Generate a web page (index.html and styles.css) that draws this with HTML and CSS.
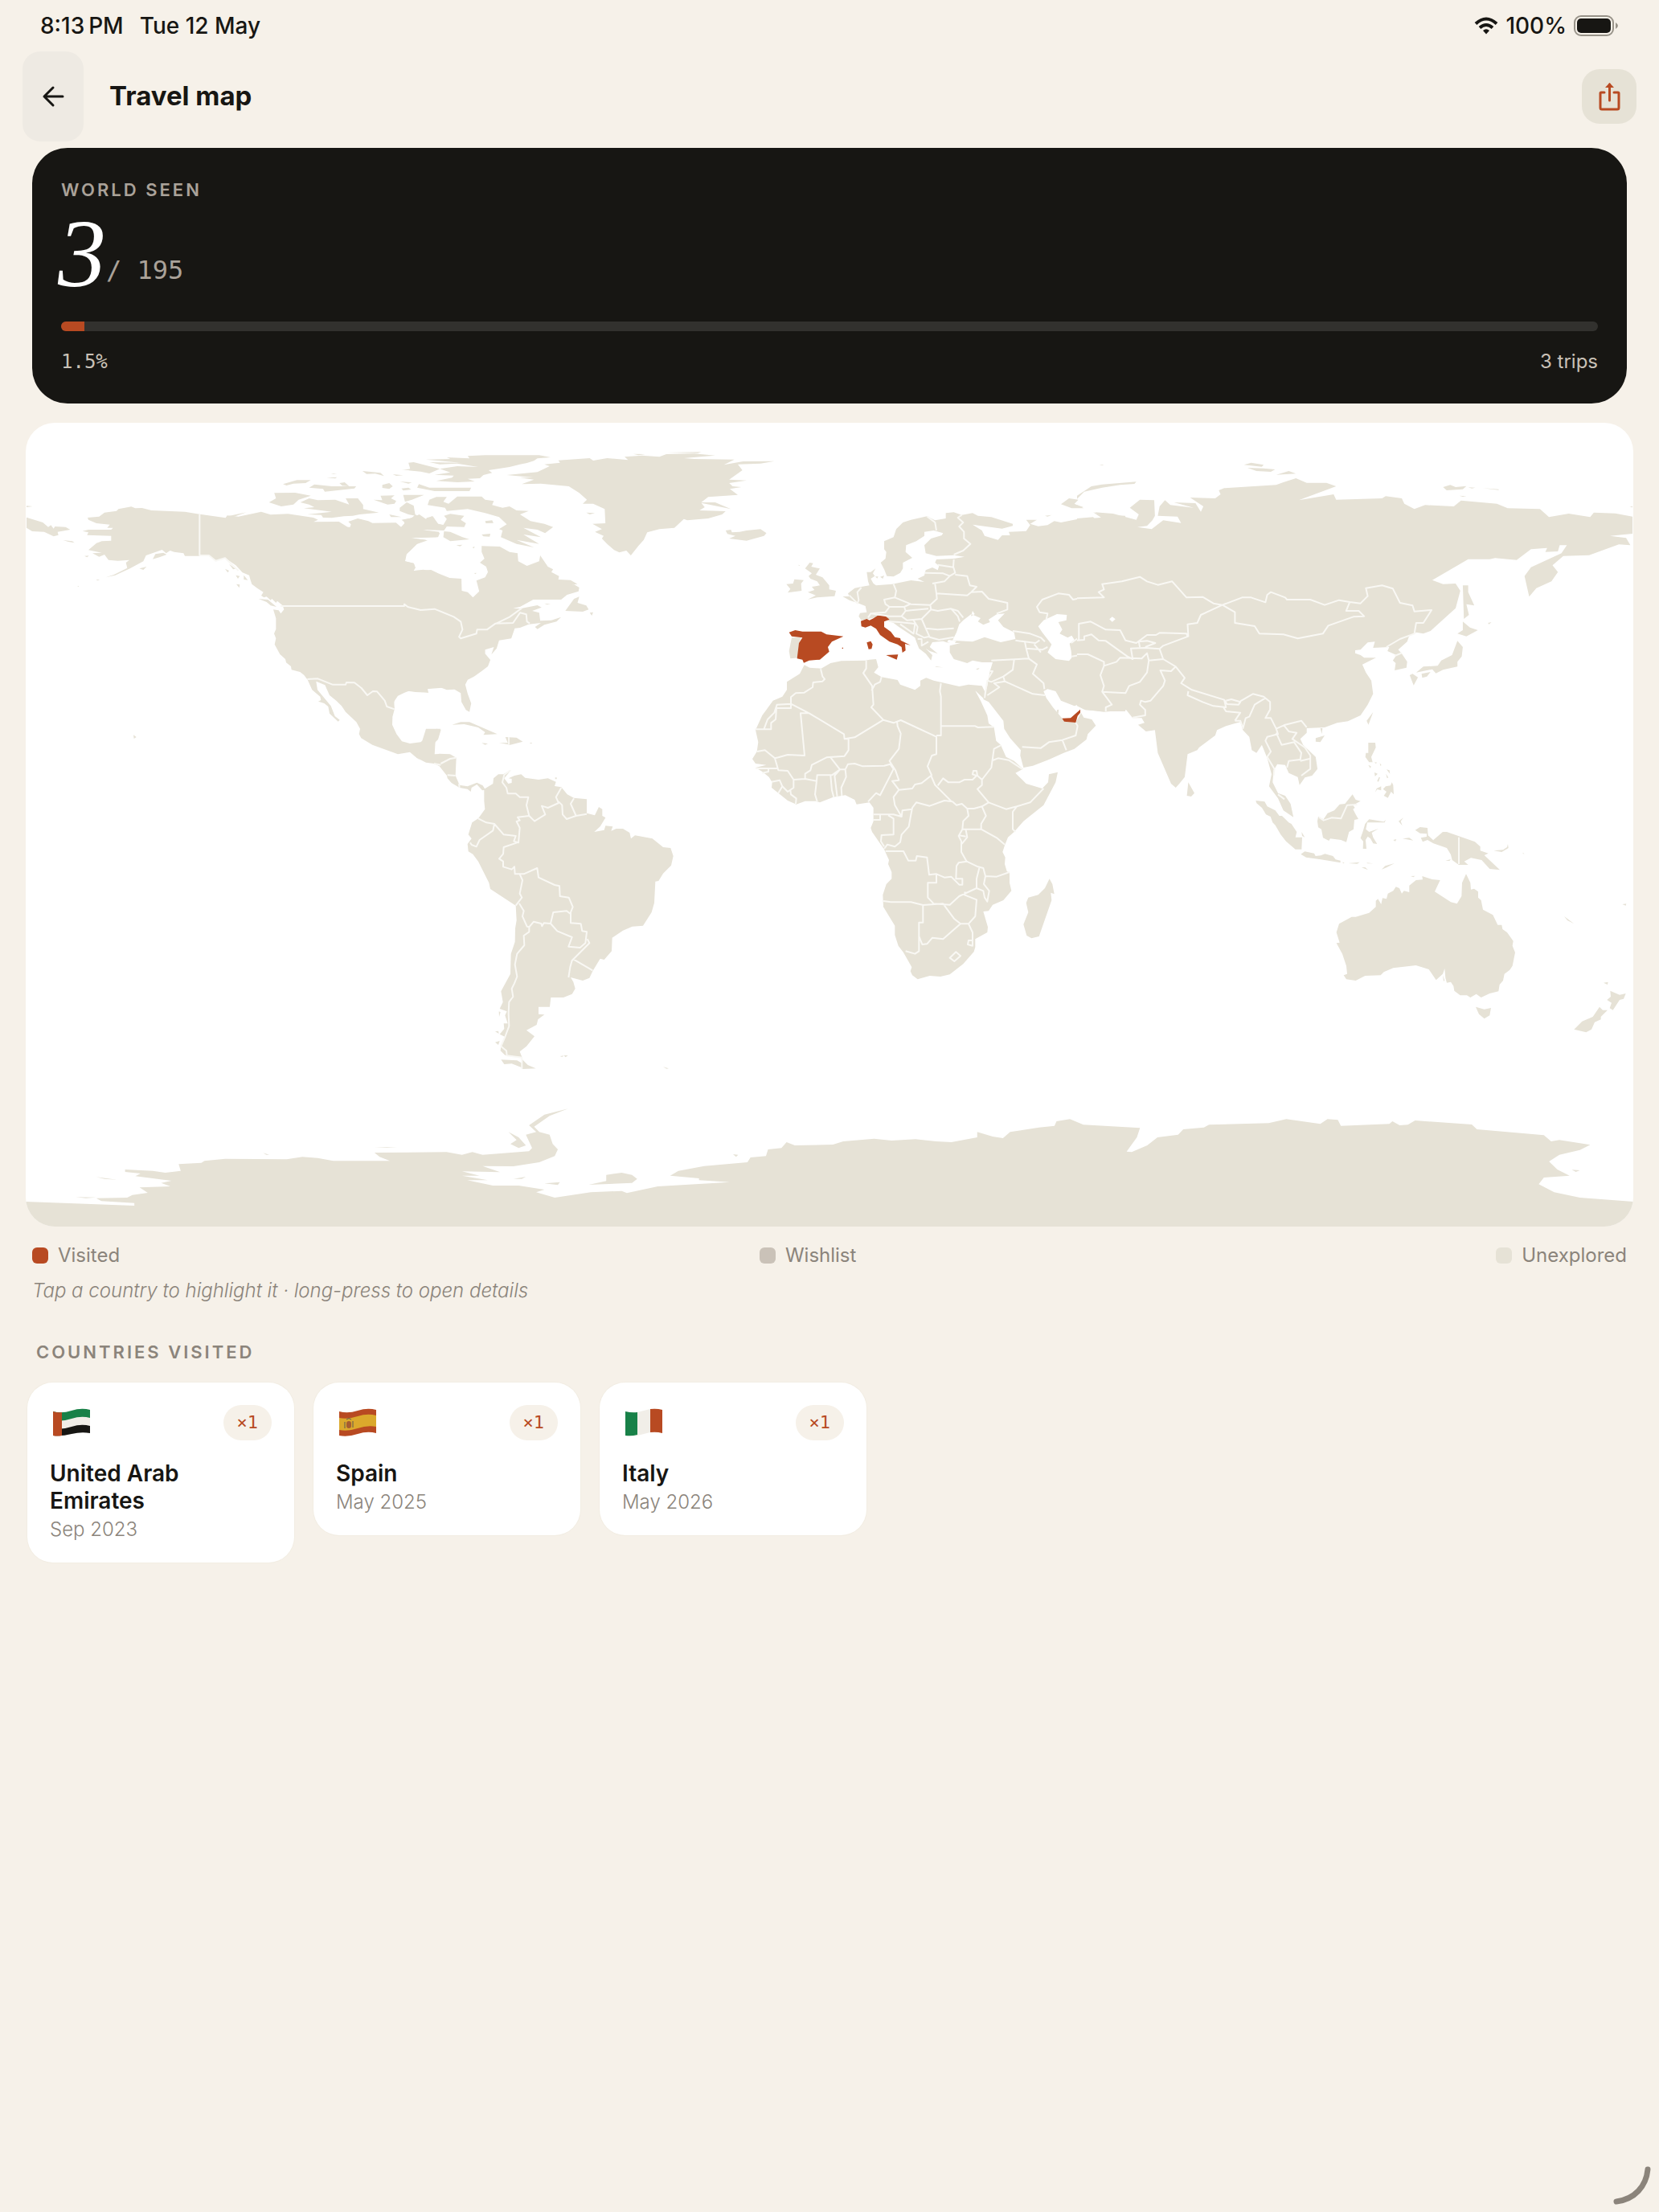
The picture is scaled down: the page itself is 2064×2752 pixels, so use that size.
FILE: index.html
```html
<!DOCTYPE html>
<html lang="en">
<head>
<meta charset="utf-8">
<meta name="viewport" content="width=device-width, initial-scale=1">
<title>Travel map</title>
<link rel="stylesheet" href="styles.css">
</head>
<body>
<div class="status">
  <span class="status-time">8:13&#8201;PM</span>
  <span class="status-date">Tue 12 May</span>
  <span class="status-right">
    <svg class="wifi" viewBox="0 0 30 22" aria-hidden="true"><g fill="none" stroke="#171613" stroke-width="4"><path d="M2 8.500Q15-3.500 28 8.500"/><path d="M7 13.500Q15 6.500 23 13.500"/></g><path d="M11 17Q15 13.500 19 17L15 21.500Z" fill="#171613"/></svg>
    <span>100%</span>
    <svg class="battery" viewBox="0 0 56 26" aria-hidden="true"><rect x="1" y="1" width="48" height="24" rx="8" fill="none" stroke="#989389" stroke-width="2"/><rect x="4" y="4" width="42" height="18" rx="5" fill="#171613"/><path d="M52 9Q55 11 55 13T52 17Z" fill="#989389"/></svg>
  </span>
</div>

<header class="header">
  <button class="back" type="button" aria-label="Back"><svg viewBox="0 0 28 28"><path d="M14 3L3 14 14 25M3 14H26" fill="none" stroke="#171613" stroke-width="3" stroke-linecap="round" stroke-linejoin="round"/></svg></button>
  <h1 class="title">Travel map</h1>
  <button class="share" type="button" aria-label="Share"><svg viewBox="0 0 28 36"><g fill="none" stroke="#b84a22" stroke-width="3" stroke-linecap="round" stroke-linejoin="round"><path d="M8 13H4Q3 13 3 14V32Q3 34 5 34H24Q26 34 26 32V14Q26 13 25 13H20M14.500 3V23"/></g><path d="M14.500 1L20 7H9Z" fill="#b84a22"/></svg></button>
</header>

<main class="main">
<section class="summary">
  <h2 class="eyebrow eyebrow-dark">World seen</h2>
  <p class="score"><span class="score-count">3</span><span class="score-total">/ 195</span></p>
  <div class="track"><div class="track-fill" style="width:1.5%"></div></div>
  <div class="summary-foot"><span class="percent">1.5%</span><span class="trips">3 trips</span></div>
</section>

<svg class="map" viewBox="0 0 2000 1000" role="img" aria-label="World map of visited countries">
<!-- North America, west -->
<g transform="translate(-2 -1) scale(.33333)">
<path class="land" d="M237 357L280 353 300 338 345 332 352 325 400 316 415 322 440 321 475 330 600 335 655 344 752 358 758 349 800 353 850 343 885 335 920 346 985 343 1080 357 1097 365 1080 373 1175 372 1215 397 1220 382 1210 372 1245 360 1285 370 1300 377 1388 376 1407 392 1420 378 1415 365 1440 360 1475 345 1500 362 1522 352 1545 380 1560 385 1560 400 1480 402 1550 410 1540 430 1442 433 1500 440 1465 455 1425 495 1422 520 1455 528 1460 545 1452 556 1490 551 1530 558 1560 575V992L1500 997 1510 1010 1480 1005 1440 1003 1420 1010 1395 1022 1380 1045 1383 1070 1375 1100 1374 1130 1390 1165 1410 1192 1440 1200 1480 1195 1500 1180 1503 1153 1540 1145 1556 1148 1545 1185 1530 1200 1530 1240 1560 1240 1560 1260 1470 1258 1440 1232 1395 1240 1300 1205 1258 1180 1250 1165 1254 1145 1240 1120 1200 1082 1185 1060 1165 1040 1140 1020 1123 982 1090 968 1095 1000 1145 1060 1160 1098 1178 1112 1172 1118 1140 1088 1135 1062 1120 1050 1098 1043 1108 1038 1105 1025 1075 1000 1058 962 1045 945 1030 933 998 925 996 912 978 898 975 885 955 867 935 830 940 808 933 790 940 773 940 733 930 700 950 703 958 715 970 700 965 685 945 668 940 675 925 660 920 665 905 652 895 655 885 648 893 635 870 620 850 605 845 590 840 572 815 562 790 535 750 508 715 520 690 497 655 500 600 500 595 490 560 485 545 480 530 490 515 477 455 498 445 520 395 547 340 572 305 580 335 570 385 545 380 525 393 515 350 518 315 515 300 495 280 503 255 490 290 488 240 478 270 452 290 445 325 443 325 425 235 422 240 412 218 407 240 402 325 402 332 395 310 395 320 383 270 378 240 365Z"/>
<path class="land" d="M9 356L70 375 90 392 100 385 110 398 115 390 155 392 172 402 125 410 128 422 110 427 75 410 30 408 9 395ZM9 313L32 315 9 318ZM145 441L180 445 188 451 165 447ZM480 512L490 493 520 488 532 495 505 505ZM430 547L457 540 445 552ZM875 660L910 663 942 690 920 685 905 672ZM792 605L805 607 803 619ZM225 500L242 499 235 505ZM268 589L282 588 275 592ZM408 1168L419 1176 410 1182ZM750 548L765 555 760 562ZM765 530L790 548 780 550ZM790 572L805 575 798 585ZM820 572L835 590 820 588ZM200 612L204 612 204 614 200 614ZM760 352L830 337 780 355Z"/>
<path class="border" d="M655 344V498H690L715 518 750 508 800 555M1530 1205L1490 1207 1482 1218 1498 1235 1475 1237 1470 1258M1520 1205V1240"/>
</g>
<!-- North America, east, and Greenland -->
<g transform="translate(268 -1) scale(.43367 .33333)">
<path class="land" d="M300 392H465L470 375 460 365 490 358 500 345 515 360 530 372 532 358 550 352 565 380 580 384 590 362 582 350 600 343 640 350 630 365 645 378 640 392 590 390 582 405 520 402 570 415 565 430 485 433 535 442 505 455 475 493 470 520 495 527 500 543 495 555 545 552 565 565 598 582 632 585 633 630 650 635 665 655 683 632 675 592 700 580 708 560 703 540 685 525 698 510 690 485 690 463 742 465 770 485 793 490 795 520 820 537 855 520 858 498 880 540 895 550 890 560 912 575 910 588 945 590 965 605 910 610 950 602 970 618 968 632 935 645 918 663 838 663 800 690 780 695 800 697 850 684 862 692 835 705 855 712 858 742 890 740 918 728 905 745 870 757 850 773 843 765 860 750 825 755 800 768 785 770 775 808 740 815 733 845 718 868 725 840 700 850 700 865 715 888 708 912 690 930 668 950 650 962 643 980 650 1015 660 1050 655 1082 645 1075 632 1045 630 1012 612 998 590 1000 570 990 535 995 537 1010 500 1008 470 1003 440 1030 438 1065H300Z"/>
<path class="land" d="M95 265L155 264 200 275 165 290 150 308 115 315 80 300 100 285ZM170 300L195 285 220 292 270 290 310 308 300 285 335 285 350 310 350 325 395 338 340 345 320 350 295 352 260 358 235 357 230 347 190 345 260 335 180 322 210 318 195 308ZM380 290L405 292 400 275 440 274 430 285 445 295 440 305 420 308ZM465 272L525 272 510 280 490 290 470 298ZM455 320L475 300 495 312 500 350 480 345 455 332ZM425 345L460 355 430 355ZM505 245L510 232 540 245 660 245 655 258 555 258ZM405 235L425 228 435 240 425 250 405 246ZM455 222L490 226 480 230ZM460 248L480 245 488 252 465 256ZM195 245L210 233 260 240 330 240 325 248 240 260 235 250ZM282 228L297 225 310 240 290 238ZM120 232L160 217 200 217 185 228 150 230 130 237ZM245 208L275 206 270 211ZM258 193L275 193 265 195ZM348 183L400 190 410 202 385 193 360 194ZM435 195L465 199 445 201ZM468 178L485 175 480 152 495 150 540 165 570 175 540 192 515 185 460 178ZM530 140L600 138 590 132 655 136 650 127 700 124 855 124 888 132 850 136 840 145 820 153 800 158 770 168 710 180 720 190 695 198 685 210 650 212 670 222 620 225 560 220 605 208 610 200 555 197 600 188 570 175 620 165 680 168 620 155 570 158 540 150 630 152ZM535 310L540 290 560 280 590 280 580 298 595 305 620 278 690 278 700 290 725 295 720 310 750 320 770 315 790 330 825 332 800 345 830 370 870 380 895 392 872 415 850 402 810 395 860 430 810 420 855 455 790 440 840 468 790 455 745 430 750 405 740 400 762 382 740 355 700 340 650 325 590 332 585 320ZM582 408L600 410 635 430 655 438 600 445 580 430ZM700 370L720 367 724 377 702 378ZM690 420L715 417 713 428 695 427ZM617 460L635 458 628 464ZM663 468L670 465 668 472ZM930 705L955 660 970 652 965 675 990 685 997 700 980 708ZM1000 712L1010 710 1006 723ZM870 677L888 680 878 682ZM668 564L675 563 673 568Z"/>
<path class="land" d="M762 198L850 187 885 165 870 158 915 152 910 143 1000 135 1010 144 1050 135 1110 142 1100 130 1150 125 1200 130 1220 120 1300 118 1360 125 1270 135 1300 138 1415 140 1385 160 1440 147 1530 146 1490 155 1425 158 1438 180 1400 215 1450 218 1400 228 1410 240 1435 243 1402 250 1425 272 1340 280 1320 300 1360 300 1405 325 1320 302 1330 318 1315 330 1390 333 1380 345 1340 360 1280 367 1270 362 1243 395 1200 400 1165 412 1155 440 1140 462 1118 498 1105 480 1085 487 1070 478 1050 455 1035 435 1040 425 1015 410 1035 400 1008 380 1045 378 1043 325 1010 305 980 305 992 290 970 265 940 240 860 230 805 232 840 215 800 208 838 207ZM990 338L1015 340 1000 345ZM1125 119L1160 120 1140 124ZM1220 114L1320 112 1310 116ZM1390 405L1405 402 1408 412 1430 410 1450 405 1490 400 1507 415 1500 425 1450 443 1400 435 1418 425 1395 418ZM605 1130L630 1120 655 1120 735 1165 695 1168 700 1158 680 1140 640 1128ZM690 1198L708 1200 700 1205ZM740 1197L765 1198 758 1176 790 1178 808 1193 772 1205ZM829 1197L834 1197 834 1200 829 1200ZM685 1092L690 1100"/>
<path class="border" d="M113 687H468V680L478 690 515 702 555 698 610 727 630 745 635 775 625 802 630 808 675 790 677 775 705 775 730 752 780 750 800 712 818 718 820 745 828 752M732 752L770 728 805 695M190 960L220 958 262 980 300 980 302 972 325 973 345 993 362 1020 378 1005 390 1006 412 1040 418 1062 440 1072M768 1176V1203"/>
</g>
<!-- Central and South America -->
<g transform="translate(508 374) scale(.33333)">
<path class="land" d="M-65 128L-55 100-30 20 24 20 5 65 2 118 20 113 60 115 83 128 80 195 95 230 125 235 160 221 182 232 192 248 180 250 160 228 140 240 137 255 125 245 95 240 65 222 50 205 48 195 20 160 0 150-30 146Z"/>
<path class="land" d="M187 245L220 225 222 205 240 190 258 190 287 175 262 205 277 225 290 222 290 207 278 205 300 195 325 190 340 203 390 210 425 205 455 218 450 234 475 238 497 265 522 278 570 283 570 335 600 343 615 312 628 320 628 345 640 352 620 385 598 405 635 398 640 382 667 385 655 418 645 408 680 393 705 393 730 408 735 430 750 418 815 430 855 462 883 465 893 495 885 530 855 560 838 588 826 590 822 670 812 705 780 755 740 758 705 773 665 800 663 850 635 882 620 878 592 925 580 950 555 960 510 948 520 965 527 990 515 1010 483 1023 436 1023 432 1058 390 1058 390 1085 412 1087 388 1105 383 1125 345 1145 375 1168 345 1205 320 1225 328 1245 272 1240 265 1238 248 1222 250 1205 265 1170 245 1160 262 1140 260 1120 275 1120 265 1090 272 1075 245 1065 257 1040 250 1000 285 935 287 860 302 815 303 765 308 735 305 680 210 618 205 595 165 515 145 488 128 478 125 450 140 430 128 415 142 370 165 355 190 320 187 290ZM330 1255V1290L380 1288 350 1275ZM250 1255L310 1258 328 1268V1285L290 1270 262 1272ZM242 1075L248 1078 243 1095ZM228 1150L240 1148 242 1158ZM228 1190L245 1185 240 1200ZM470 1242L485 1240 478 1245ZM485 1238L500 1240 490 1246ZM855 1282L876 1288 868 1289ZM452 202L458 202 458 208 452 208ZM308 179L312 180"/>
<path class="border" d="M285 175L262 192 255 220 270 240 275 262H305L320 275H352L345 305 355 345 312 350 320 362 308 366 320 390 315 445 298 440 305 420 260 415 225 375 195 370 165 355M225 375L220 400 170 435 158 460 140 453 135 445M310 445L260 462 258 487 243 505 258 515V535L290 545 300 535 302 562H335L385 540 390 575 450 603 468 607 470 645 503 650 518 685 510 705V745L548 748 553 775 570 778 565 820 545 837 502 833 515 798 460 775 435 747 445 705 495 700 510 712M320 563L330 585 320 635 328 650 305 680M318 672L335 700 330 720 347 758 355 760 372 740 400 747 403 757 410 745 433 747M355 760V778L335 792 337 828 310 860 302 900 310 945 300 970 290 990 295 1020 280 1040 278 1080 280 1130 265 1170 250 1205 270 1222 272 1240 328 1247V1290M572 805L580 820 515 885 508 910 502 948M520 880L592 922M355 345L375 365 415 340 402 308 425 315 465 297 455 275 475 240M465 292L478 305 480 340 495 357 530 345 570 338M522 280L510 300 530 345M25 150L60 132 82 128M50 193L80 195M93 225L95 240M0 150L25 155"/>
</g>
<!-- Europe and the Middle East -->
<g transform="translate(888 94) scale(.33333)">
<path class="land" d="M475 275L490 275 508 262 498 280 505 290 490 300 500 318 510 325 570 320 640 306 690 312 665 300 690 288 695 268 720 258 740 268 745 252 730 240 735 228 800 225 840 218 800 212 735 215 695 205 690 175 715 150 755 138 760 130 725 120 690 125 690 140 660 160 622 175 620 200 645 222 610 240 610 262 600 278 575 292 550 290 540 265 527 240 545 225 548 200 540 190 540 160 575 145 585 115 610 90 640 80 700 67 730 82 770 75 770 55 800 52 830 62 870 55 890 65 940 70 1020 95 1020 103 980 113 870 98 905 120 915 140 965 155 980 138 1010 138 1005 125 1070 122 1085 100 1070 80 1110 80 1085 95 1115 104 1150 100 1175 85 1200 90 1260 78 1350 72 1320 52 1350 60 1440 65V795H1365L1290 790 1280 765 1250 775 1200 755 1180 720 1150 712 1135 720 1145 745 1170 780 1205 822 1212 833 1255 837 1275 800 1285 818 1315 825 1330 848 1300 880 1295 900 1250 935 1210 950 1155 975 1095 998 1060 1005 1048 960 1050 940 1010 895 988 860 985 830 930 760 910 750 925 700 935 645 945 612 905 612 870 605 850 615 800 600 785 575 785 550 825 540 780 540 760 533 720 537 710 555 740 580 710 570 695 560 720 585 715 605 695 580 670 560 660 535 655 520 595 480 575 465 560 460 530 440 455 455 445 440 450 428 475 425 470 402 440 390 410 380 385 366 410 366 405 355 430 335 455 330 485 325 480 310Z"/>
<path class="sea" d="M795 530L810 500 820 470 835 455 865 432 900 447 890 460 910 472 935 462 930 452 960 433 990 430 965 455 985 480 1025 500 1030 525 975 537 915 518 870 535ZM1115 478L1135 455 1185 432 1222 435 1220 455 1190 462 1205 490 1195 505 1225 520 1240 512 1250 528 1232 542 1238 570 1240 595 1230 607 1180 600 1150 575 1165 545 1130 500ZM1380 452L1392 442 1405 452 1392 462ZM780 528L810 533 800 543 775 538ZM878 432L870 420 864 440Z"/>
<path class="land" d="M195 520L230 520 222 540 220 595 190 598 185 570ZM245 262L262 240 275 242 268 255 300 262 285 285 310 295 335 325 335 340 360 345 355 365 290 370 255 377 285 362 255 350 280 342 270 330 300 325 290 310 265 300 258 290 270 280ZM175 320L200 318 205 302 240 305 230 318 232 345 180 352 190 338ZM730 627L760 631 735 630ZM882 637L896 633 890 640ZM525 293L540 288 535 300ZM507 292L518 292 514 299ZM640 262L646 262 642 268ZM220 248L226 250 222 252ZM1200 22L1230 0 1265 5 1250 20 1285 37 1240 37ZM1185 790L1192 788 1190 803 1184 800ZM1140 65L1165 62 1150 68Z"/>
<path class="visited" d="M185 500L208 492 235 497 305 497 325 508 388 515 345 535 330 555 335 572 300 602 260 605 240 614 235 602 215 598 222 540 235 520 195 515ZM453 458L475 450 485 455 500 448 515 438 540 436 560 452 540 460 540 480 565 498 580 518 600 522 602 530 638 548 618 543 620 568 608 576 605 555 590 545 560 535 525 510 510 487 490 475 470 482 455 478ZM475 538L490 533 497 545 493 562 482 563ZM547 585L592 583 587 602ZM383 557H387V561H383ZM1204 821L1236 820 1272 788 1272 800 1262 812 1255 837 1212 833Z"/>
<path class="border" d="M700 67L730 90 735 120M830 62L815 72 835 90 820 105 838 125 838 150 862 170 835 195 800 210M800 228L798 257 740 248M798 255L805 278 785 290 760 280 690 278M805 285L850 290 860 325 885 330 865 350 850 362 735 355 730 320M785 290L765 310 720 318M735 355L737 375 712 398 640 395 580 370 585 345 575 320M865 350L905 348 930 375 1000 390V415L960 430M712 398L715 415 740 420 790 412 815 420 835 445M790 412L815 440 822 460M580 370L540 378 545 395 560 405 615 405 640 393M495 430L545 425 560 405M615 405L620 420 605 440 560 440 490 430 480 445M620 420L640 418 705 412M605 440L625 455 680 450 715 415M680 450L695 485 740 490 800 485M695 485L710 518 745 528 800 518M650 455L665 480 660 505 690 520 710 515M560 460L595 462 655 468 650 505 600 470M665 525L680 525 680 550 705 535M455 333L440 350 445 380 440 392 410 362M1145 452L1150 430 1120 425 1110 405 1130 378 1190 355 1230 360 1245 378 1290 368 1360 372 1350 345 1365 338 1355 320 1440 312M1020 495L1085 505 1125 520 1140 535M1030 530L1065 535 1105 540 1120 530M1065 535L1070 560 1130 565 1150 555M1100 545L1125 575M1070 560L1080 598 940 605M1080 598L1110 620 1095 655 1135 690 1138 712M1025 603L1020 640 985 665 940 685 925 680 915 745M985 665L990 683 1095 730 1140 735M990 683L950 690 970 705 925 735M935 645L945 645 930 670M1240 590L1300 580 1355 605 1360 625 1350 650 1360 700 1350 722 1390 755 1385 770 1365 780V795M1360 628L1400 620 1440 605M1350 722L1380 727 1440 722M1268 527V468L1310 458 1350 480 1390 485 1440 515M1238 540L1280 510 1330 510 1350 535 1440 580M1055 928L1125 932 1155 910 1205 902 1255 885 1262 850 1255 837M1205 902L1220 940"/>
</g>
<!-- Africa -->
<g transform="translate(868 254) scale(.33333)">
<path class="land" d="M302 142L322 152 365 155 400 135 440 127 530 125 545 122 570 120 578 150 562 170 590 187 650 198 660 215 715 235 735 220 735 200 757 190 785 200 880 222 915 215 965 220 975 240 972 268 940 238 960 275 985 330 990 360 1010 375 1018 425 1035 440 1055 485 1085 500 1118 530 1090 545 1105 560 1130 585 1190 603 1212 580 1215 550 1248 542 1240 580 1195 665 1120 725 1085 765 1062 785 1050 815 1042 840 1052 860 1050 885 1058 912 1068 918 1068 955 1075 985 1045 1020 1005 1037 990 1060 970 1062 987 1120 985 1140 940 1165 940 1195 935 1212 895 1258 845 1297 810 1305 770 1302 725 1315 705 1300 698 1285 703 1270 672 1215 653 1190 640 1150 640 1115 597 1045 595 1000 608 960 628 940 628 915 615 885 618 870 600 830 555 765 550 750 560 725 560 675 545 655 497 662 490 645 455 628 410 635 360 655 345 650 305 650 272 662 240 648 180 600 182 580 170 560 145 540 120 525 160 515 120 510 108 493 125 465 130 430 120 385 145 330 160 310 185 275 220 260 237 235 237 205 285 175ZM1217 940L1228 960 1235 997 1222 992 1225 1020 1178 1155 1150 1162 1132 1152 1120 1110 1138 1065 1130 1030 1138 1010 1175 1000 1200 975Z"/>
<path class="border" d="M363 157L370 185 378 195 370 203 335 207 333 225 302 245 270 247 252 262V303H198L195 345 178 358V382H118M152 380L165 345 190 320 200 290 252 287 320 322 450 400 452 418 490 412 597 347 552 300 560 290 555 220 522 172 533 155V125M590 187L585 205 565 215 553 238M597 347L635 358 662 348 795 410V475L778 480 762 520 778 555M812 210L808 240 812 260V405H795M812 370L940 370 950 375 1010 373M648 352L650 370 662 398 655 455 620 500 642 535 655 572 630 575 655 608M452 418H467V460L452 482 385 487 330 515 325 535 305 548V570M320 322H288L303 480 240 477 205 487 192 490 205 535 240 537 262 570 305 567 348 575 350 553 405 553 435 532 400 487M125 465L155 460 192 490M120 528H205M168 528V540L145 545M435 532L455 532 465 512 490 510 520 520 600 518 622 512 635 530 620 560 585 628 570 620 540 652M435 532L415 555 425 635M455 532L458 560 440 600 442 630M400 555L405 610 412 635M348 575L342 625 350 652M262 570L262 600 240 615 220 595 205 620M220 595L210 572 180 578M250 610L252 625 272 640 270 660M655 608L705 603 715 588 740 583 775 555 790 590 850 650M655 608L635 635 640 665 665 708 668 685 705 680M560 700L635 700 665 708M585 703V720H558M615 703L635 715V775L590 777 588 800 600 820M600 828L612 812 640 820 660 803 665 775 692 745 700 700 705 675 720 655 770 668 825 648 855 652 870 665 890 660 910 678 935 678 965 670 990 655 948 605 965 590 965 570 948 555 945 537 933 537 930 550 945 555 930 570 900 570 880 580 840 580 820 565 800 592M965 570L1000 525 1010 455 1035 442M1005 498L1025 490 1065 497 1115 530M990 655L1055 680 1095 670 1145 655 1195 603M1095 670L1080 690V755L1090 765M965 670L980 705 962 735V755H892L895 725 915 705 910 678M962 755L1020 787 1050 812M892 755L878 780 888 800 888 840 908 875 950 895 970 900 978 930 1020 932 1068 915M905 758L910 785 890 810M880 778L905 782M908 875L878 880 870 892 868 940H892V962L880 962 850 932 825 935 795 922 768 925 760 860 722 855 718 872H690L672 837H605M795 922V955H763V1010L785 1033 845 1037 880 1005 945 975 945 940 955 900M597 1023L625 1027 700 1027 745 1038 820 1033 862 1090 885 1108 915 1108 940 1080 945 1018 900 1000 902 988M745 1040V1103H730V1210L715 1220 680 1210M730 1155L742 1185 760 1183 780 1160 820 1165 885 1108M915 1108L930 1140 930 1190 912 1185 915 1170 930 1170M845 1235L868 1213 885 1228 862 1248ZM945 975L970 985 975 1010 985 1025 992 985 972 960 978 930"/>
</g>
<!-- Asia -->
<g transform="translate(1308 34) scale(.44643 .33333)">
<path class="land" d="M0 255L45 250 50 258 70 250 50 232 100 237 165 260 172 240 147 215 175 185 215 187 217 245 210 262 195 283 168 287 208 295 240 262 290 272 280 248 225 245 230 210 245 187 260 205 325 215 270 195 330 198 345 230 352 210 315 177 385 180 400 165 395 150 410 142 555 130 575 120 610 105 640 122 695 122 722 135 618 187 715 165 722 185 850 180 860 172 905 180 912 200 940 220 970 205 1050 210 1070 188 1170 200 1200 217 1290 220 1315 250 1370 237 1430 250 1440 233 1500 236 1548 248V312L1485 320 1530 328 1542 355 1510 352 1427 392 1355 395 1325 430 1340 455 1322 490 1280 515 1260 547 1247 470 1265 437 1350 385 1365 355 1345 355 1340 378 1305 380 1310 365 1265 370 1225 410 1165 403 1150 407 1090 407 990 485 1020 500 1055 498 1068 525 1055 590 985 675 965 685 945 680 925 695 920 715 895 745 905 760 920 790 918 812 885 822 888 795 880 785 890 765 865 750 870 735 825 738 830 715 810 718 790 745 775 747 775 758 790 765 800 775 833 775 795 800 805 830 820 860 825 910 810 950 790 990 755 1012 725 1018 690 1035 640 1038 640 1055 622 1078 630 1100 665 1145 670 1190 655 1215 635 1222 620 1250 615 1220 590 1205 580 1175 558 1172 548 1195 545 1240 560 1280 580 1290 595 1320 603 1370 575 1345 560 1300 535 1255 542 1210 530 1150 515 1100 500 1130 487 1120 480 1070 462 1045 455 1015 440 1020 415 1030 390 1045 385 1065 340 1110 335 1120 308 1135 300 1220 285 1245 275 1260 262 1245 225 1130 217 1045 192 1050 170 1025 188 1018 180 1000 155 1000 137 970 75 977 20 968 0 955Z"/>
<path class="sea" d="M90 631L98 622 107 631 98 641Z"/>
<path class="land" d="M1075 505L1090 505 1090 530 1107 580 1085 575 1092 615 1078 630ZM1075 640L1095 662 1117 672 1085 695 1060 685 1075 672ZM1060 712L1075 735 1072 770 1060 790V808L1020 820 1000 833 990 818 945 830 965 808 1005 805 1015 785 1045 765ZM960 835L985 828 975 845 962 850ZM927 840L935 835 950 848 938 878ZM825 978L812 1025 807 1010ZM665 1075L690 1065 678 1090 665 1088ZM310 1240L327 1280 318 1293 306 1290ZM0 170L40 135 70 128 165 118 160 126 120 130 70 140 20 155 0 182ZM465 55L485 47 520 55 515 62ZM475 66L520 68 552 72 540 81 500 78ZM555 92L590 78 610 88ZM1020 138L1040 130 1055 138 1085 134 1075 146 1030 150ZM1090 139L1110 140 1100 143ZM1130 142L1175 146 1175 149ZM1065 170L1085 172 1075 174ZM25 57L32 58M62 54L75 55 70 57ZM1540 212L1548 209V214ZM0 205L18 213 0 216ZM1145 645L1155 642 1148 650ZM678 1038L684 1038 682 1060Z"/>
<path class="border" d="M0 553L75 550 60 530 75 520 70 500 125 490 175 473 195 490 225 503 265 490 305 550 350 548 380 572 405 578 345 615 335 645 308 650 310 695 240 730 230 742 240 780 200 785M5 710V648L38 640 80 670 120 672 135 710 165 720 195 690 220 690 230 682 305 685 308 695M0 710L20 708 20 695 40 688 60 710 80 712 140 770 155 780 150 740 190 738 230 742M0 762L30 762 75 790V805L110 790 120 775 180 778 195 758 200 785M75 805L65 840 75 880 70 902 135 907 145 880 175 865 195 830 200 785M70 902L97 950 80 960 80 975M175 735L172 715 195 712 218 720 190 735M240 780L275 808 262 825 232 822 245 860 240 880 205 935 190 940 178 935 175 950 190 970V990L155 998M275 808L300 850 290 870 320 895 410 932 415 960 380 955 350 940 308 915 310 900M415 935L430 930 455 940 450 950 418 948 410 932M455 937L490 910 520 920 538 940V968L525 1000 540 1000 555 1040 580 1025 625 1010 640 1035M408 960L415 975 455 980 440 1010M462 1040L470 1000 480 995 495 950 525 925M440 1010L455 1010 462 1035M405 578L460 550 485 550 525 568 530 540 540 530 580 550 585 558 650 558 690 578 730 560 760 567 750 600 785 600 800 620 770 622 700 655 685 685 615 703 575 688 508 685 495 657 440 645V605L405 578M760 567L790 572 810 545 805 515 850 505 880 517 900 570 935 580 940 602 988 597 965 645 945 645 940 685 900 705 862 735M885 768L905 757M555 1040L560 1060 530 1070 525 1085 540 1125 530 1145 550 1190 548 1215M555 1055L570 1100 605 1090 625 1130 622 1155 590 1160 585 1185M575 1025L590 1050 612 1055 600 1078 635 1110 650 1140V1190L625 1215M622 1160L648 1152M560 1285L578 1303"/>
</g>
<!-- South-east Asia and Oceania -->
<g transform="translate(1508 354) scale(.33333)">
<path class="land" d="M67 348L100 352 110 370 140 385 155 405 165 405 190 430 200 435 220 465 215 485 240 485 238 530 215 530 180 500 160 475 140 440 130 430 122 408 105 400 90 375 70 358ZM235 548L250 538 285 545 290 555 310 553 325 547 355 555 365 568 383 572 383 580 310 568 255 560ZM297 425L300 408 320 418 335 395 360 385 380 362 400 360 428 325 440 345 458 350 430 365 437 375 430 380 440 400 450 417 435 420 432 455 415 465 405 503 385 495 345 490 340 498 318 487 312 455 300 448ZM475 435L490 418 545 427 552 420 548 430 483 430 478 455 490 465 525 453 500 468 505 485 520 510 505 508 495 490 485 482 477 495 480 528 467 528 468 500 458 488 468 460ZM600 425L618 412 608 425 614 442ZM615 490L640 487 655 497ZM580 495L592 492 588 500ZM537 605L550 592 585 582 555 598ZM462 598L475 597 486 607ZM480 580L505 583 485 583ZM390 578L398 580 394 583ZM412 582L455 578 445 584ZM662 458L680 447 708 450 710 478 732 498 730 508 708 495 690 502 683 487 705 483 705 472 680 470ZM730 495L765 465 780 465 885 502 905 520 905 535 935 545 920 552 978 607 940 603 910 570 870 562 845 575 860 588 825 588 800 570 795 550 780 525 730 508ZM955 535L990 532 1005 522 1008 510 1010 525 985 540ZM1022 505L1026 512M1063 542L1070 547 1065 547ZM487 132L513 132 515 150 498 185 503 205 490 205 476 185 478 170 487 170ZM487 215L497 220 495 228ZM510 243L522 248 512 258ZM527 260L531 262 525 278 520 275ZM555 232L566 235 568 248ZM553 248L562 262 557 265ZM510 205L520 206 515 210ZM530 208L536 216 532 218ZM542 305L552 295 570 292 575 280 580 290 582 325 572 315 560 338 545 330 555 315ZM512 318L518 303 535 295 535 310 520 306ZM775 572L795 567 790 573ZM238 465L250 485 240 480Z"/>
<path class="land" d="M688 630L725 642 755 645 735 688 795 727 818 733 835 705 837 655 852 622 868 655 870 680 882 677 897 688 897 710 908 720 915 755 952 775 970 812 985 812 988 828 1005 840 1028 872 1025 890 1035 915 1025 965 1015 980 995 995 990 1020 977 1035 973 1060 940 1068 908 1083 890 1070 868 1083 855 1075 830 1075 808 1058 805 1040 795 1025 780 1028 775 1010 772 975 765 995 740 1018 713 978 665 963 580 973 545 988 533 1000 475 1002 440 1020 405 1015 395 1000 408 995 405 965 390 920 368 880 380 878 368 840 378 808 425 782 440 782 490 767 515 745 515 722 523 715 535 735 540 712 555 715 560 695 580 685 590 670 603 675 612 695 620 685 640 690 640 665 665 645 690 643ZM888 1118L920 1127 945 1122 940 1150 920 1162 900 1145ZM1390 1058L1425 1073 1448 1068 1440 1088 1425 1092 1400 1130 1388 1123 1395 1103 1378 1092 1392 1080ZM1350 1118L1362 1130 1380 1130 1355 1155V1165L1332 1175 1320 1202 1300 1213 1255 1202 1285 1172 1325 1155ZM1365 1028L1382 1025 1380 1035ZM1218 780L1255 808 1230 795ZM1435 735L1450 733 1448 740ZM1462 715L1470 712M765 1000L772 1020 768 1022ZM645 630L662 629 655 634Z"/>
<path class="border" d="M303 410L320 422 350 412 385 415 408 365 445 363M825 485V585"/>
</g>
<!-- Antarctica -->
<g transform="translate(-2 814) scale(1.28189 .33333)">
<path class="land" d="M0 465L107 480 107 470 75 463 70 452 100 450 105 440 120 432 112 412 142 408 133 395 143 387 108 370 113 360 98 354 98 345 125 350 137 357 152 350 150 325 172 320 175 313 195 305 255 307 270 298 285 302 300 313 355 313 345 298 340 282 410 280 425 290 435 280 445 290 470 283 490 277 493 265 487 215 497 205 490 180 505 140 528 118 510 145 495 185 500 205 510 215 513 250 518 270 515 295 500 318 475 333 445 332 462 355 425 352 442 368 425 368 450 385 430 385 455 405 480 405 505 420 497 430 515 450 550 430 580 425 585 433 615 408 685 392 655 385 655 378 627 368 635 350 660 332 702 318 705 300 720 295 722 270 735 265 740 243 748 255 785 252 795 240 825 230 842 237 865 232 885 240 900 243 925 225 925 205 940 222 950 228 957 205 985 188 1000 182 1002 165 1015 157 1028 178 1083 190 1080 225 1070 278 1075 280 1090 255 1100 225 1120 215 1125 195 1145 188 1150 178 1208 172 1225 157 1258 175 1265 157 1275 160 1278 182 1325 175 1328 165 1335 180 1343 178 1350 162 1405 177 1410 195 1475 217 1482 240 1490 235 1520 253 1510 272 1490 290 1480 315 1488 345 1500 368 1475 375 1470 400 1485 430 1510 450 1562 465V560H0ZM470 205L480 225 487 255 480 265 472 250 478 235ZM565 365L580 357 590 365 595 380 590 395 548 402 565 388ZM70 373L90 383 78 380ZM50 448L70 449 60 452ZM475 380L487 372 483 380ZM505 397L520 392 518 403ZM340 262L362 262 352 264ZM688 288L693 290 691 298ZM232 283L238 290 235 290ZM1502 346L1510 348 1506 354ZM442 245L448 245M137 330L147 333Z"/>
</g>
</svg>

<ul class="legend">
  <li><span class="swatch swatch-visited"></span>Visited</li>
  <li><span class="swatch swatch-wishlist"></span>Wishlist</li>
  <li><span class="swatch swatch-unexplored"></span>Unexplored</li>
</ul>
<p class="hint">Tap a country to highlight it · long-press to open details</p>

<h2 class="eyebrow eyebrow-light">Countries visited</h2>
<div class="cards">
  <article class="card">
    <div class="card-top">
      <svg class="flag" viewBox="0 0 48 36" aria-hidden="true"><path d="M1 4Q12 7 24 3T47 2V31Q36 28 24 32T1 34Z" fill="#f1eee8"/><path d="M1 4Q12 7 24 3T47 2V12Q36 9 24 13T1 15Z" fill="#188148"/><path d="M1 25Q12 27 24 23T47 22V31Q36 29 24 32T1 34Z" fill="#171613"/><path d="M1 4Q7 6 12 5V34Q7 35 1 34Z" fill="#b84a22"/></svg>
      <span class="count">×1</span>
    </div>
    <h3 class="country">United Arab Emirates</h3>
    <p class="date">Sep 2023</p>
  </article>
  <article class="card">
    <div class="card-top">
      <svg class="flag" viewBox="0 0 48 36" aria-hidden="true"><path d="M1 4Q12 7 24 3T47 2V31Q36 28 24 32T1 34Z" fill="#b84a22"/><path d="M1 12Q12 14 24 10T47 9V23Q36 21 24 25T1 27Z" fill="#dba92c"/><rect x="10" y="16" width="6" height="9" rx="3" fill="#a65b30"/><path d="M8 17V25M18 16V24M10 14Q13 11 16 14" fill="none" stroke="#5c5951" stroke-width="1"/></svg>
      <span class="count">×1</span>
    </div>
    <h3 class="country">Spain</h3>
    <p class="date">May 2025</p>
  </article>
  <article class="card">
    <div class="card-top">
      <svg class="flag" viewBox="0 0 48 36" aria-hidden="true"><path d="M1 4Q12 7 24 3T47 2V31Q36 28 24 32T1 34Z" fill="#f1eee8"/><path d="M1 4Q9 6 16 5V33Q9 35 1 34Z" fill="#188148"/><path d="M32 1Q40 0 47 2V31Q40 29 32 30Z" fill="#b84a22"/></svg>
      <span class="count">×1</span>
    </div>
    <h3 class="country">Italy</h3>
    <p class="date">May 2026</p>
  </article>
</div>
</main>
<svg class="corner" viewBox="0 0 52 52" aria-hidden="true"><path d="M43 4C41 25 27 41 4 44" fill="none" stroke="#8b847b" stroke-width="7" stroke-linecap="round"/></svg>
</body>
</html>
```

FILE: styles.css
```css
* {
  box-sizing: border-box;
  margin: 0;
  padding: 0;
}

body {
  min-height: 100vh;
  background: #f6f1e9;
  color: #171613;
  font-family: Inter, "Liberation Sans", sans-serif;
}

.status {
  display: flex;
  align-items: center;
  gap: 20px;
  height: 64px;
  padding: 0 50px;
  font-size: 28px;
  font-weight: 500;
}

.status-right {
  display: flex;
  align-items: center;
  gap: 9px;
  margin-left: auto;
}

.wifi {
  width: 30px;
  height: 22px;
}

.battery {
  width: 56px;
  height: 26px;
}

.header {
  display: flex;
  align-items: center;
  height: 112px;
  margin-bottom: 8px;
  padding: 0 28px;
}

button {
  display: flex;
  align-items: center;
  justify-content: center;
  border: 0;
}

.back {
  width: 76px;
  height: 112px;
  border-radius: 22px;
  background: #eeeae3;
}

.back svg {
  width: 28px;
  height: 28px;
}

.title {
  margin-left: 32px;
  padding-bottom: 2px;
  font-size: 33px;
  font-weight: 700;
}

.share {
  width: 68px;
  height: 68px;
  margin-left: auto;
  border-radius: 22px;
  background: #e6e2d6;
}

.share svg {
  width: 28px;
  height: 36px;
}

.main {
  padding: 0 32px 80px;
}

.summary {
  margin: 0 8px 24px;
  padding: 36px;
  border-radius: 44px;
  background: #171613;
}

.eyebrow {
  font-size: 22px;
  font-weight: 600;
  line-height: 32px;
  letter-spacing: 3px;
  text-transform: uppercase;
}

.eyebrow-dark {
  color: #aaa299;
}

.score {
  display: flex;
  align-items: flex-start;
  height: 148px;
  line-height: 128px;
}

.score-count {
  margin-left: -4px;
  color: #fff;
  font-family: "Liberation Serif", serif;
  font-size: 120px;
  font-style: italic;
}

.score-total {
  padding-top: 20px;
  color: #aaa299;
  font-family: "DejaVu Sans Mono", monospace;
  font-size: 32px;
}

.track {
  overflow: hidden;
  height: 12px;
  border-radius: 6px;
  background: #32312e;
}

.track-fill {
  height: 12px;
  background: #b84a22;
}

.summary-foot {
  display: flex;
  justify-content: space-between;
  margin-top: 22px;
  color: #c9c1b7;
  font-size: 24px;
  line-height: 32px;
}

.percent {
  font-family: "DejaVu Sans Mono", monospace;
}

.map {
  display: block;
  width: 100%;
  aspect-ratio: 2 / 1;
  border-radius: 36px;
  background: #fff;
}

.land {
  fill: #e6e2d6;
}

.sea {
  fill: #fff;
}

.visited {
  fill: #b84a22;
}

.border {
  fill: none;
  stroke: #f9f8f4;
  stroke-width: 2px;
  stroke-linejoin: round;
  vector-effect: non-scaling-stroke;
}

.legend {
  display: flex;
  justify-content: space-between;
  margin: 20px 8px 0;
  color: #8b847b;
  font-size: 24px;
  line-height: 32px;
  list-style: none;
}

.legend li {
  display: flex;
  align-items: center;
  gap: 12px;
}

.swatch {
  width: 20px;
  height: 20px;
  border-radius: 6px;
}

.swatch-visited {
  background: #b84a22;
}

.swatch-wishlist {
  background: #cac2b8;
}

.swatch-unexplored {
  background: #e6e2d6;
}

.hint {
  margin: 12px 8px 0;
  color: #8b847b;
  font-size: 24px;
  font-style: italic;
  font-weight: 300;
  line-height: 32px;
}

.eyebrow-light {
  margin: 44px 13px 22px;
  color: #8b847b;
}

.cards {
  display: flex;
  flex-wrap: wrap;
  align-items: flex-start;
  gap: 24px;
  padding: 0 2px;
}

.card {
  width: 332px;
  padding: 28px 28px 26px;
  border-radius: 32px;
  background: #fff;
  box-shadow: 0 0 0 1px #f2ede3;
}

.card-top {
  display: flex;
  align-items: center;
  justify-content: space-between;
  height: 44px;
  padding-left: 3px;
}

.flag {
  width: 48px;
  height: 36px;
}

.count {
  padding: 0 17px;
  border-radius: 22px;
  background: #f6f1e9;
  color: #b84a22;
  font-family: "DejaVu Sans Mono", monospace;
  font-size: 22px;
  line-height: 44px;
}

.country {
  margin-top: 24px;
  font-size: 28px;
  font-weight: 600;
  line-height: 34px;
}

.date {
  margin-top: 4px;
  color: #8b847b;
  font-size: 24px;
  font-weight: 300;
  line-height: 30px;
}

.corner {
  position: fixed;
  right: 5px;
  bottom: 5px;
  width: 52px;
  height: 52px;
}
```
